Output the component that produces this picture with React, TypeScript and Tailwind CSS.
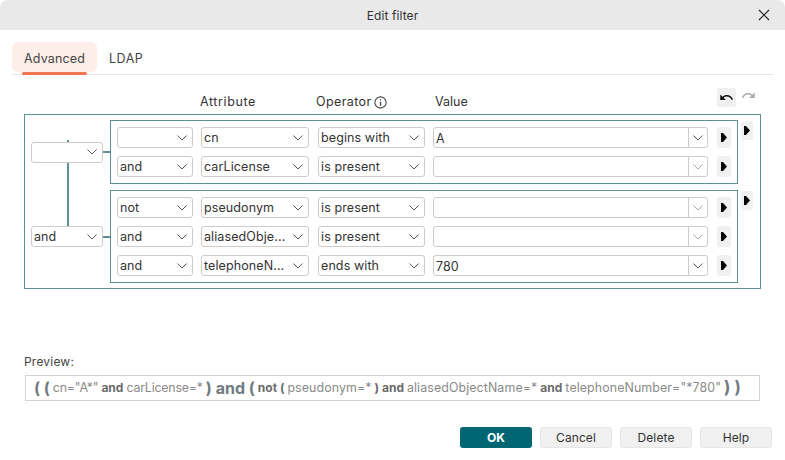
import { MdRedo, MdUndo } from "react-icons/md";

const FONT = "font-['Inter','Noto_Sans',sans-serif]";

function Chevron({ muted }: { muted?: boolean }) {
  return (
    <svg width="10" height="6" viewBox="0 0 10 6" fill="none" className={muted ? "text-[#a8a8a8]" : "text-[#555]"}>
      <path d="M0.5 0.5 L5 5 L9.5 0.5" stroke="currentColor" strokeWidth="1" />
    </svg>
  );
}

function Select({ value, width }: { value: string; width: string }) {
  return (
    <div className={`${width} h-[21px] shrink-0 flex items-center justify-between border border-[#cfcbc8] rounded-[3px] bg-white pl-[2px] pr-[5px] text-[12.5px] text-[#333] tracking-[0.1px]`}>
      <span className="whitespace-nowrap pt-px">{value}</span>
      <Chevron />
    </div>
  );
}

function ArrowButton({ className }: { className: string }) {
  return (
    <button className={`${className} shrink-0 flex items-center justify-center bg-[#f0f0f0] rounded-[3px]`}>
      <svg width="6" height="9" viewBox="0 0 6 9">
        <path d="M0 0 H2 L6 4.5 L2 9 H0 Z" fill="#000" />
      </svg>
    </button>
  );
}

function Row({ op, attr, cmp, val }: { op: string; attr: string; cmp: string; val: string }) {
  return (
    <div className="flex items-center h-[21px]">
      <Select value={op} width="w-[76px]" />
      <div className="w-2 shrink-0" />
      <Select value={attr} width="w-[108px]" />
      <div className="w-[9px] shrink-0" />
      <Select value={cmp} width="w-[107px]" />
      <div className="w-2 shrink-0" />
      <div className="w-[275px] h-[21px] shrink-0 flex border border-[#cfcbc8] rounded-[3px] bg-white text-[12.5px] text-[#333]">
        <span className="flex-1 pl-[2px] leading-[21px]">{val}</span>
        <div className="w-[19px] flex items-center justify-center border-l border-[#cfcbc8]">
          <Chevron muted={!val} />
        </div>
      </div>
      <div className="w-[9px] shrink-0" />
      <ArrowButton className="w-[14px] h-[21px]" />
    </div>
  );
}

function Group({ op, rows }: { op: string; rows: { op: string; attr: string; cmp: string; val: string }[] }) {
  return (
    <div className="flex items-center">
      <div className="ml-[6px] w-[72px] shrink-0">
        <div className="h-[21px] flex items-center justify-between border border-[#cfcbc8] rounded-[3px] bg-white pl-[2px] pr-[5px] text-[12.5px] text-[#333] relative z-10">
          <span className="pt-px">{op}</span>
          <Chevron />
        </div>
      </div>
      <div className="w-[7px] h-[2px] bg-[#5a9197] shrink-0" />
      <div className="w-[628px] border border-[#5a9197] pl-[6px] pt-[6px] pb-[6px] flex flex-col gap-2 shrink-0">
        {rows.map((r) => (
          <Row key={r.attr} {...r} />
        ))}
      </div>
      <ArrowButton className="ml-[3px] w-[12px] h-[19px] self-start mt-px" />
    </div>
  );
}

function Btn({ label }: { label: string }) {
  return (
    <button className="w-[72px] h-[21px] bg-[#f0f0f0] border border-[#e6e6e6] rounded-[3px] text-[12px] text-[#333] pt-px tracking-[0.1px]">
      {label}
    </button>
  );
}

export default function App() {
  return (
    <div className={`${FONT} w-[785px] h-[460px] bg-white flex flex-col overflow-hidden rounded-lg`}>
      <div className="h-[30px] bg-[#e9e9e9] flex items-center justify-center relative text-[12px] text-[#333] pt-px tracking-[0.1px]">
        Edit filter
        <svg width="12" height="12" viewBox="0 0 12 12" className="absolute right-[15px] top-[9px]">
          <path d="M1 1 L11 11 M11 1 L1 11" stroke="#222" strokeWidth="1.1" />
        </svg>
      </div>

      <div className="mx-3 mt-3 h-[33px] flex border-b border-[#e6e6e6] text-[12.5px] text-[#444] tracking-[0.15px]">
        <div className="relative w-[85px] h-[30px] bg-[#fdeee9] rounded-md flex items-center justify-center pt-1">
          Advanced
          <div className="absolute left-[10px] right-[10px] -bottom-[3px] h-[3px] bg-[#ee7752] rounded-sm" />
        </div>
        <div className="ml-3 h-[30px] flex items-center pt-1 tracking-[0.5px]">LDAP</div>
      </div>

      <div className="h-[39px] flex items-end text-[12.5px] text-[#333] relative">
        <span className="ml-[200px] mb-[2px] w-[116px] tracking-[0.6px]">Attribute</span>
        <span className="mb-[2px] flex items-center gap-[2px] w-[119px] tracking-[0.4px]">
          Operator
          <svg width="13" height="13" viewBox="0 0 12 12" fill="none">
            <circle cx="6" cy="6" r="5.2" stroke="#444" />
            <path d="M6 5.2 V9 M6 3 V4.2" stroke="#444" strokeWidth="1.2" />
          </svg>
        </span>
        <span className="mb-[2px]">Value</span>
        <div className="ml-auto mr-[49px] mb-[7px] w-[19px] h-[19px] flex items-center justify-center bg-[#f0f0f0] rounded-[3px]">
          <MdUndo size={15} color="#111" />
        </div>
        <div className="absolute left-[741px] top-[13px]">
          <MdRedo size={15} color="#aaa" />
        </div>
      </div>

      <div className="relative mx-6 w-[737px] h-[175px] border border-[#5a9197] pt-[5px] flex flex-col gap-[6px]">
        <div className="absolute left-[42px] top-[25px] w-[2px] h-[87px] bg-[#5a9197]" />
        <Group
          op=""
          rows={[
            { op: "", attr: "cn", cmp: "begins with", val: "A" },
            { op: "and", attr: "carLicense", cmp: "is present", val: "" },
          ]}
        />
        <Group
          op="and"
          rows={[
            { op: "not", attr: "pseudonym", cmp: "is present", val: "" },
            { op: "and", attr: "aliasedObje...", cmp: "is present", val: "" },
            { op: "and", attr: "telephoneN...", cmp: "ends with", val: "780" },
          ]}
        />
      </div>

      <div className="ml-6 mt-[65px] text-[12px] text-[#444] leading-4 tracking-[0.2px]">Preview:</div>
      <div className="ml-[25px] mt-[5px] w-[735px] h-[26px] border border-[#d4d4d4] flex items-center gap-[3px] pl-2 whitespace-nowrap overflow-hidden text-[12.4px] text-[#8a8a8a]">
        <b className="text-[16px] text-[#6f7b80]">( (</b>
        <span className="tracking-[-0.2px]">cn="A*"</span>
        <b className="text-[12px] text-[#6b6b6b]">and</b>
        <span className="tracking-[-0.2px]">carLicense=*</span>
        <b className="text-[16px] text-[#6f7b80]">) and (</b>
        <b className="text-[12px] text-[#6b6b6b]">not (</b>
        <span className="tracking-[0.1px]">pseudonym=*</span>
        <b className="text-[12px] text-[#6b6b6b]">) and</b>
        <span className="tracking-[0.1px]">aliasedObjectName=*</span>
        <b className="text-[12px] text-[#6b6b6b]">and</b>
        <span className="tracking-[0.1px]">telephoneNumber="*780"</span>
        <b className="text-[17px] text-[#6f7b80]">) )</b>
      </div>

      <div className="mt-[26px] mr-[13px] flex justify-end gap-2">
        <button className="w-[72px] h-[21px] bg-[#006674] rounded-[3px] text-[12px] font-bold text-white pt-px">OK</button>
        <Btn label="Cancel" />
        <Btn label="Delete" />
        <Btn label="Help" />
      </div>
    </div>
  );
}
